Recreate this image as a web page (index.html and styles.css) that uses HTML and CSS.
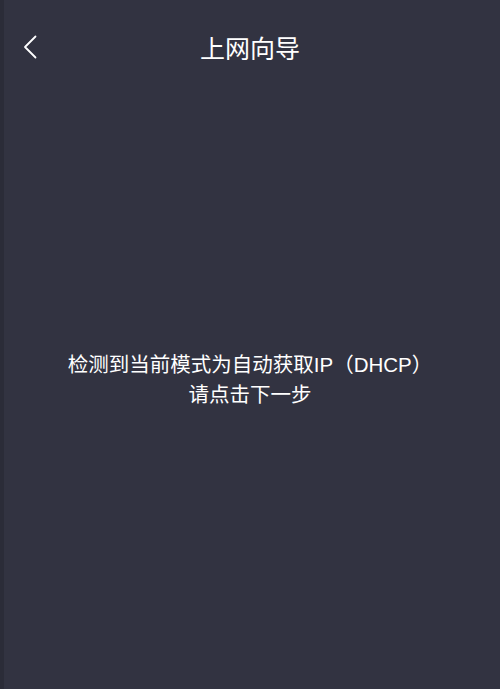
FILE: index.html
```html
<!DOCTYPE html>
<html lang="zh-CN">
<head>
<meta charset="utf-8">
<title>上网向导</title>
<link rel="stylesheet" href="styles.css">
</head>
<body>
<div class="screen">
  <header class="nav">
    <button class="back" aria-label="返回">
      <svg width="14" height="24" viewBox="0 0 14 24"><path d="M12.5 1.5 L2 12 L12.5 22.5" fill="none" stroke="#ffffff" stroke-width="1.8" stroke-linecap="round" stroke-linejoin="round"/></svg>
    </button>
    <h1 class="title">上网向导</h1>
  </header>
  <main class="content">
    <p class="msg">检测到当前模式为自动获取IP（DHCP）<br>请点击下一步</p>
  </main>
</div>
</body>
</html>
```
FILE: styles.css
```css
html, body {
  margin: 0;
  padding: 0;
  background: #323341;
}
.screen {
  width: 500px;
  height: 689px;
  background: #323341;
  box-sizing: border-box;
  border-left: 4px solid #2b2c38;
  display: flex;
  flex-direction: column;
  font-family: "Liberation Sans", "Noto Sans CJK SC", sans-serif;
  color: #ffffff;
}
.nav {
  position: relative;
  height: 98px;
  display: flex;
  align-items: flex-start;
  justify-content: center;
}
.back {
  position: absolute;
  left: 19px;
  top: 35px;
  background: none;
  border: 0;
  padding: 0;
  width: 14px;
  height: 24px;
}
.back svg { display: block; }
.title {
  margin: 31px 0 0 -4px;
  font-size: 25px;
  font-weight: 400;
  line-height: 36px;
}
.content {
  flex: 1;
  display: flex;
  justify-content: center;
}
.msg {
  margin: 252px 0 0 -4px;
  font-size: 20.5px;
  line-height: 30px;
  text-align: center;
}
```
